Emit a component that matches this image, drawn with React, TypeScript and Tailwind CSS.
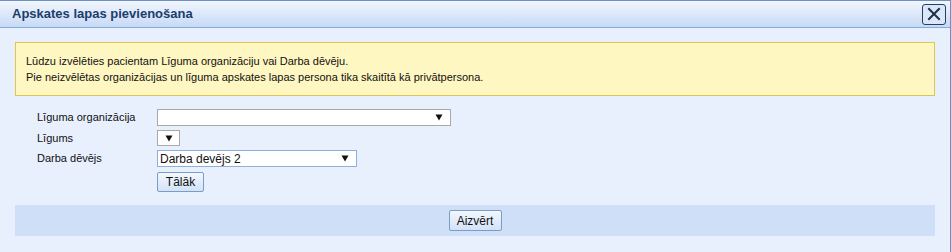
import React from "react";

const Arrow = () => (
  <svg width="8" height="7" viewBox="0 0 8 7" className="shrink-0">
    <path d="M0.5 0.5 L7.5 0.5 L4 6.5 Z" fill="#111" />
  </svg>
);

export default function App() {
  return (
    <div
      className="w-[951px] h-[252px] bg-[#e8effd] border-t border-r border-[#6b91c4] flex flex-col text-[#111]"
      style={{ fontFamily: '"Liberation Sans", Arial, sans-serif' }}
    >
      <div className="h-[27px] shrink-0 flex items-center justify-between pl-[12px] pr-[4px] border-b border-[#8aa9d6] bg-gradient-to-b from-[#f2f6fd] to-[#c6daf6]">
        <span className="text-[13px] font-bold text-[#1c3d6c]">Apskates lapas pievienošana</span>
        <div className="w-[24px] h-[21px] border border-[#2a3f5e] rounded-[3px] flex items-center justify-center bg-[#dbe7f8]">
          <svg width="14" height="14" viewBox="0 0 14 14">
            <path d="M2 2 L12 12 M12 2 L2 12" stroke="#1d2f4a" strokeWidth="2" strokeLinecap="square" />
          </svg>
        </div>
      </div>
      <div className="px-[15px] pt-[14px] flex flex-col">
        <div className="w-[920px] h-[54px] bg-[#fff7c2] border border-[#dcc64e] pl-[10px] flex flex-col justify-center text-[11px] leading-[16px]">
          <div>Lūdzu izvēlēties pacientam Līguma organizāciju vai Darba dēvēju.</div>
          <div>Pie neizvēlētas organizācijas un līguma apskates lapas persona tika skaitītā kā privātpersona.</div>
        </div>
        <div className="pl-[22px] pt-[13px] flex flex-col gap-[4px] text-[11px]">
          <div className="flex items-center h-[17px]">
            <span className="w-[120px]">Līguma organizācija</span>
            <div className="w-[294px] h-[17px] bg-white border border-[#a9a9a9] flex items-center justify-end pr-[7px]">
              <Arrow />
            </div>
          </div>
          <div className="flex items-center h-[16px]">
            <span className="w-[120px]">Līgums</span>
            <div className="w-[23px] h-[16px] bg-white border border-[#a9a9a9] flex items-center justify-center">
              <Arrow />
            </div>
          </div>
          <div className="flex items-center h-[17px]">
            <span className="w-[120px]">Darba dēvējs</span>
            <div className="w-[200px] h-[17px] bg-white border border-[#8fb0dc] flex items-center justify-between pl-[2px] pr-[7px] text-[12px]">
              <span>Darba devējs 2</span>
              <Arrow />
            </div>
          </div>
          <div className="flex items-center h-[20px] mt-[1px]">
            <span className="w-[120px]"></span>
            <button className="w-[47px] h-[20px] border border-[#7a9cc8] rounded-[2px] bg-gradient-to-b from-[#f3f7fd] to-[#d3e2f7] text-[12px] flex items-center justify-center">
              Tālāk
            </button>
          </div>
        </div>
        <div className="mt-[13px] w-[920px] h-[31px] bg-[#d0dff8] flex items-center justify-center">
          <button className="w-[53px] h-[21px] border border-[#7a9cc8] rounded-[2px] bg-gradient-to-b from-[#f3f7fd] to-[#d3e2f7] text-[12px] flex items-center justify-center">
            Aizvērt
          </button>
        </div>
      </div>
    </div>
  );
}
